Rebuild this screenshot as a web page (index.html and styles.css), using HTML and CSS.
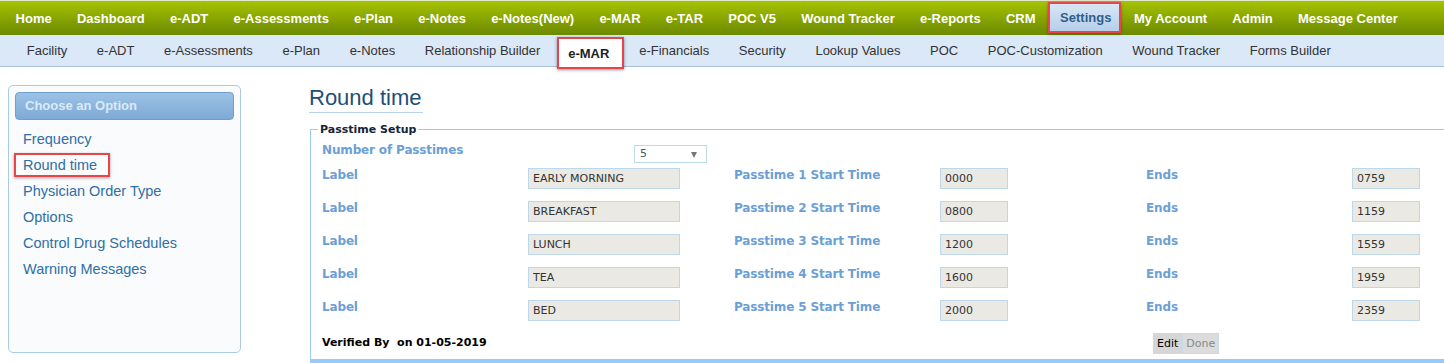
FILE: index.html
```html
<!DOCTYPE html>
<html lang="en">
<head>
    <meta charset="UTF-8">
    <title>Round time</title>
    <link rel="stylesheet" href="styles.css">
</head>
<body>

<div class="topnav">
    <a>Home</a>
    <a>Dashboard</a>
    <a>e-ADT</a>
    <a>e-Assessments</a>
    <a>e-Plan</a>
    <a>e-Notes</a>
    <a>e-Notes(New)</a>
    <a>e-MAR</a>
    <a>e-TAR</a>
    <a>POC V5</a>
    <a>Wound Tracker</a>
    <a>e-Reports</a>
    <a>CRM</a>
    <a class="current">Settings</a>
    <a>My Account</a>
    <a>Admin</a>
    <a>Message Center</a>
</div>

<div class="subnav">
    <a>Facility</a>
    <a>e-ADT</a>
    <a>e-Assessments</a>
    <a>e-Plan</a>
    <a>e-Notes</a>
    <a>Relationship Builder</a>
    <a class="current">e-MAR</a>
    <a>e-Financials</a>
    <a>Security</a>
    <a>Lookup Values</a>
    <a>POC</a>
    <a>POC-Customization</a>
    <a>Wound Tracker</a>
    <a>Forms Builder</a>
</div>

<div class="page">
    <div class="sidebar">
        <div class="sidebar-title">Choose an Option</div>
        <ul class="options">
            <li><a>Frequency</a></li>
            <li><a class="marked">Round time</a></li>
            <li><a>Physician Order Type</a></li>
            <li><a>Options</a></li>
            <li><a>Control Drug Schedules</a></li>
            <li><a>Warning Messages</a></li>
        </ul>
    </div>

    <div class="main">
        <h1>Round time</h1>

        <fieldset class="setup">
            <legend>Passtime Setup</legend>

            <div class="row first">
                <span class="lbl">Number of Passtimes</span>
                <div class="select"><span>5</span><i class="caret"></i></div>
            </div>

            <div class="row">
                <span class="lbl">Label</span>
                <input class="field wide" type="text" value="EARLY MORNING" readonly>
                <span class="lbl">Passtime 1 Start Time</span>
                <input class="field" type="text" value="0000" readonly>
                <span class="lbl">Ends</span>
                <input class="field" type="text" value="0759" readonly>
            </div>
            <div class="row">
                <span class="lbl">Label</span>
                <input class="field wide" type="text" value="BREAKFAST" readonly>
                <span class="lbl">Passtime 2 Start Time</span>
                <input class="field" type="text" value="0800" readonly>
                <span class="lbl">Ends</span>
                <input class="field" type="text" value="1159" readonly>
            </div>
            <div class="row">
                <span class="lbl">Label</span>
                <input class="field wide" type="text" value="LUNCH" readonly>
                <span class="lbl">Passtime 3 Start Time</span>
                <input class="field" type="text" value="1200" readonly>
                <span class="lbl">Ends</span>
                <input class="field" type="text" value="1559" readonly>
            </div>
            <div class="row">
                <span class="lbl">Label</span>
                <input class="field wide" type="text" value="TEA" readonly>
                <span class="lbl">Passtime 4 Start Time</span>
                <input class="field" type="text" value="1600" readonly>
                <span class="lbl">Ends</span>
                <input class="field" type="text" value="1959" readonly>
            </div>
            <div class="row">
                <span class="lbl">Label</span>
                <input class="field wide" type="text" value="BED" readonly>
                <span class="lbl">Passtime 5 Start Time</span>
                <input class="field" type="text" value="2000" readonly>
                <span class="lbl">Ends</span>
                <input class="field" type="text" value="2359" readonly>
            </div>

            <div class="row last">
                <span class="verified">Verified By&nbsp; on 01-05-2019</span>
                <div class="actions">
                    <button class="btn">Edit</button><button class="btn off">Done</button>
                </div>
            </div>
        </fieldset>
    </div>
</div>

</body>
</html>
```

FILE: styles.css
```css
html, body {
    overflow: hidden;
}
body {
    margin: 0;
    font-family: "Liberation Sans", Arial, sans-serif;
    background-color: white;
    width: 1444px;
}

/* top menu */
.topnav {
    display: flex;
    height: 34px;
    border-top: 1px solid #dfe8c8;
    padding-left: 3px;
    background: linear-gradient(#a6c300, #7d9a00 70%, #6c8b00);
}
.topnav a {
    display: flex;
    align-items: center;
    padding: 0 12.6px;
    color: white;
    font-size: 13px;
    font-weight: bold;
    white-space: nowrap;
}
.topnav a.current {
    margin-top: 1px;
    height: 27px;
    padding: 0 8px 0 10px;
    border: 2px solid #e8444c;
    background: linear-gradient(#d7e6f5, #b7cfe8);
    color: #2e5f8e;
    box-shadow: 0 1px 3px rgba(0, 0, 0, 0.35);
}

/* second menu */
.subnav {
    display: flex;
    height: 31px;
    padding-left: 12px;
    background-color: #dae8f7;
    border-bottom: 1px solid #a6c0da;
}
.subnav a {
    display: flex;
    align-items: center;
    padding: 0 14.8px;
    color: #333;
    font-size: 13px;
    white-space: nowrap;
}
.subnav a.current {
    position: relative;
    align-self: flex-start;
    margin: 2px 0 0 2px;
    height: 28px;
    padding: 0 13px 0 9px;
    border: 2px solid #e8444c;
    background-color: white;
    color: #222;
    font-weight: bold;
    box-shadow: 0 1px 3px rgba(0, 0, 0, 0.4);
}

.page {
    display: flex;
    align-items: flex-start;
    padding-top: 18px;
}

/* left options */
.sidebar {
    flex: none;
    margin-left: 8px;
    width: 231px;
    height: 266px;
    border: 1px solid #aacbe8;
    border-radius: 5px;
    background-color: #f9fbfc;
}
.sidebar-title {
    margin: 6px 6px 0 6px;
    height: 26px;
    line-height: 26px;
    padding-left: 9px;
    border: 1px solid #6d9fcf;
    border-radius: 4px;
    background: linear-gradient(#9cc2e6, #7eaad6);
    color: #dce9f5;
    font-size: 13px;
    font-weight: bold;
}
.options {
    list-style: none;
    margin: 6px 0 0 0;
    padding: 0 0 0 14px;
}
.options li {
    height: 26px;
    line-height: 26px;
}
.options a {
    color: #2f6ea6;
    font-size: 14.5px;
}
.options a.marked {
    display: inline-block;
    line-height: 20px;
    margin-left: -9px;
    padding: 0 11px 0 7px;
    border: 2px solid #e8444c;
    box-shadow: 0 1px 3px rgba(0, 0, 0, 0.35);
}

/* main area */
.main {
    flex: none;
    margin-left: 68px;
    width: 1160px;
}
h1 {
    display: inline-block;
    margin: 0;
    padding: 0 1px 1px 0;
    height: 26px;
    line-height: 26px;
    font-size: 22px;
    font-weight: normal;
    color: #1f4e7a;
    border-bottom: 1px solid #b7d4ee;
}
.setup {
    margin: 10px 0 0 1px;
    padding: 0 0 6px 11px;
    border: 1px solid #9ccaf2;
    border-bottom: 6px solid #98cbfb;
    font-family: "DejaVu Sans", Verdana, sans-serif;
    font-size: 11px;
}
.setup legend {
    margin-left: -4px;
    padding: 0 2px;
    font-weight: bold;
    color: #14233a;
}
.row {
    display: grid;
    grid-template-columns: repeat(6, 206px);
    align-items: start;
    height: 33px;
}
.row.first {
    height: 25px;
    margin-top: 6px;
}
.lbl {
    display: block;
    margin-top: 1px;
    line-height: 14px;
    font-size: 12px;
    letter-spacing: -0.15px;
    font-weight: bold;
    color: #6b9fd6;
}
.field {
    box-sizing: border-box;
    margin: 1px 0 0 0;
    width: 68px;
    height: 21px;
    padding: 0 0 0 4px;
    border: 1px solid #bcd8ea;
    background-color: #eae9e3;
    color: #333;
    font-family: "DejaVu Sans", Verdana, sans-serif;
    font-size: 11px;
}
.field.wide {
    width: 152px;
}
.select {
    position: relative;
    box-sizing: border-box;
    margin: 3px 0 0 106px;
    width: 73px;
    height: 18px;
    line-height: 16px;
    padding-left: 5px;
    border: 1px solid #bcdaea;
    background-color: white;
    color: #555;
}
.caret {
    position: absolute;
    right: 9px;
    top: 6px;
    border-left: 3px solid transparent;
    border-right: 3px solid transparent;
    border-top: 6px solid #777;
}
.row.last {
    height: 21px;
}
.verified {
    grid-column: 1 / 3;
    margin-top: 4px;
    line-height: 14px;
    font-weight: bold;
    color: #000;
}
.actions {
    grid-column: 5;
    display: flex;
    margin: 1px 0 0 7px;
}
.btn {
    height: 21px;
    padding: 0 3px;
    border: 1px solid #c4dcea;
    background-color: #d6d6d6;
    color: #000;
    font-family: "DejaVu Sans", Verdana, sans-serif;
    font-size: 11px;
}
.btn.off {
    background-color: #dcdcdc;
    color: #888;
}
```
